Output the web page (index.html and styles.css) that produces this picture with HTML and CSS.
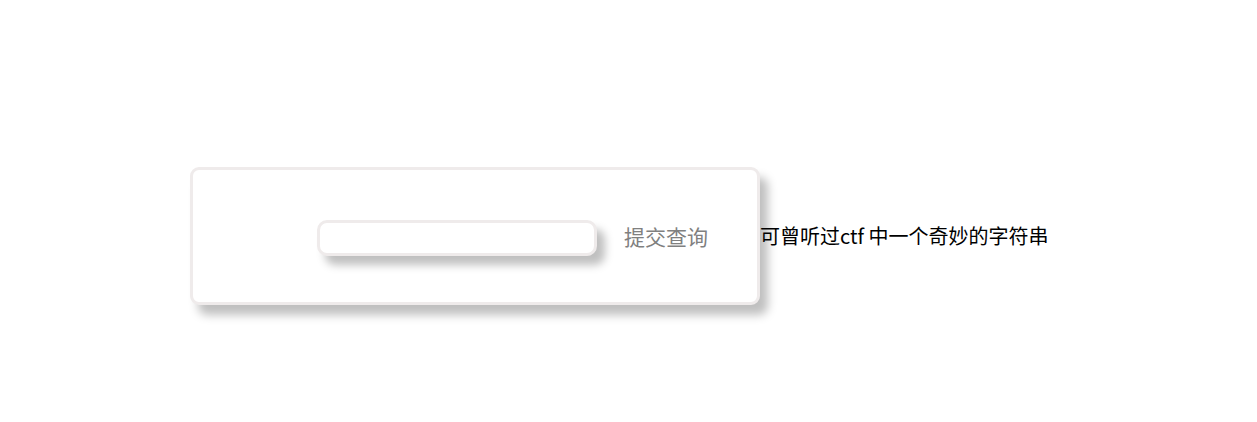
FILE: index.html
```html
<!DOCTYPE html>
<html lang="zh">
<head>
    <meta charset="UTF-8">
    <title>ctf</title>
    <link rel="stylesheet" href="styles.css">
</head>
<body>
    <div class="page">
        <form class="query-box" onsubmit="return false">
            <input class="query-input" type="text" name="query">
            <button class="query-btn" type="submit">提交查询</button>
        </form>
        <span class="hint">可曾听过ctf 中一个奇妙的字符串</span>
    </div>
</body>
</html>
```

FILE: styles.css
```css
html, body {
    height: 100%;
}
body {
    margin: 0;
    background: #fff;
    font-family: "Noto Sans CJK SC", "Noto Sans", sans-serif;
}
.page {
    display: flex;
    align-items: center;
    padding: 167px 0 60px 190px;
}
.query-box {
    box-sizing: border-box;
    width: 570px;
    height: 138px;
    margin: 0;
    padding: 0 0 0 124px;
    display: flex;
    align-items: center;
    border: 3px solid #efebeb;
    border-radius: 9px;
    background: #fff;
    box-shadow: 8px 10px 10px rgba(0, 0, 0, 0.25);
}
.query-input {
    box-sizing: border-box;
    width: 280px;
    height: 36px;
    margin-top: 3px;
    padding: 0 10px;
    border: 3px solid #efebeb;
    border-radius: 10px;
    background: #fff;
    outline: none;
    box-shadow: 8px 9px 9px rgba(0, 0, 0, 0.25);
}
.query-btn {
    margin: 0 0 0 27px;
    padding: 0;
    border: none;
    background: #fff;
    color: #808080;
    font-family: inherit;
    font-size: 21px;
    cursor: pointer;
}
.hint {
    margin-top: -2px;
    font-size: 20px;
    color: #000;
}
```
